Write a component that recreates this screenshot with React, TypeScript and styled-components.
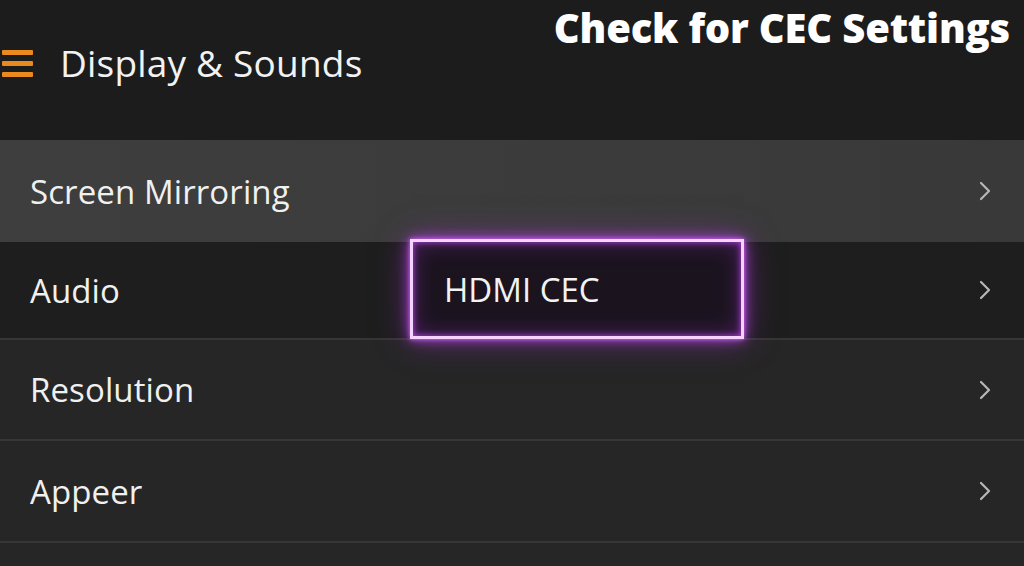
import React from "react";
import styled, { createGlobalStyle } from "styled-components";

const Global = createGlobalStyle`
  html, body { margin: 0; padding: 0; background: #1c1c1c; }
  body { width: 1024px; height: 566px; overflow: hidden; font-family: "Open Sans", "Noto Sans", sans-serif; }
`;

const Screen = styled.div`
  position: relative;
  width: 1024px;
  height: 566px;
  background: #1c1c1c;
  overflow: hidden;
  display: flex;
  flex-direction: column;
`;

const Header = styled.header`
  height: 140px;
  flex: none;
  display: flex;
  justify-content: space-between;
  align-items: flex-start;
  padding: 0 14px 0 2px;
  box-sizing: border-box;
`;

const TitleGroup = styled.div`
  display: flex;
  align-items: center;
  gap: 27px;
  margin-top: 41px;
`;

const Burger = styled.div`
  display: flex;
  flex-direction: column;
  gap: 6px;
  width: 31px;
`;

const Bar = styled.span`
  display: block;
  height: 5px;
  border-radius: 1px;
  background: #e88a1e;
`;

const Title = styled.h1`
  margin: 0;
  font-weight: 400;
  font-size: 37px;
  line-height: 44px;
  color: #f2f2f2;
  letter-spacing: 0.2px;
`;

const Annotation = styled.div`
  margin-top: 4px;
  font-weight: 800;
  font-size: 40px;
  line-height: 48px;
  color: #ffffff;
  letter-spacing: -0.2px;
`;

const List = styled.div`
  display: flex;
  flex-direction: column;
  flex: 1;
`;

const Row = styled.div<{ $bg: string; $h: number; $line?: boolean }>`
  height: ${(p) => p.$h}px;
  flex: none;
  display: flex;
  align-items: center;
  justify-content: space-between;
  padding: 0 32px 0 30px;
  box-sizing: border-box;
  background: ${(p) => p.$bg};
  border-bottom: ${(p) => (p.$line ? "2px solid #363636" : "none")};
`;

const Label = styled.span`
  font-size: 33px;
  color: #f0f0f0;
  letter-spacing: 0.1px;
`;

const Chevron = () => (
  <svg width="14" height="22" viewBox="0 0 14 22" fill="none">
    <path d="M3 3 L11 11 L3 19" stroke="#b8b8b8" strokeWidth="2.2" strokeLinecap="round" strokeLinejoin="round" />
  </svg>
);

const GlowBox = styled.div`
  position: absolute;
  left: 410px;
  top: 239px;
  width: 334px;
  height: 100px;
  box-sizing: border-box;
  border: 3px solid #f6d2ff;
  background: rgba(28, 20, 32, 0.94);
  box-shadow:
    0 0 4px #d070ff,
    0 0 12px rgba(190, 70, 240, 0.9),
    0 0 30px rgba(170, 50, 220, 0.5),
    inset 0 0 6px rgba(200, 80, 255, 0.85),
    inset 0 0 22px rgba(170, 50, 220, 0.4);
  display: flex;
  align-items: center;
  padding-left: 31px;
`;

const BoxLabel = styled.span`
  font-size: 33px;
  color: #f2f2f2;
`;

const rows = [
  { label: "Screen Mirroring", bg: "linear-gradient(90deg, #3e3e3e, #393939)", h: 102 },
  { label: "Audio", bg: "#1e1e1e", h: 98, line: true },
  { label: "Resolution", bg: "#262626", h: 101, line: true },
  { label: "Appeer", bg: "#262626", h: 102, line: true },
];

export default function App() {
  return (
    <Screen>
      <Global />
      <Header>
        <TitleGroup>
          <Burger>
            <Bar />
            <Bar />
            <Bar />
          </Burger>
          <Title>Display &amp; Sounds</Title>
        </TitleGroup>
        <Annotation>Check for CEC Settings</Annotation>
      </Header>
      <List>
        {rows.map((r) => (
          <Row key={r.label} $bg={r.bg} $h={r.h} $line={r.line}>
            <Label>{r.label}</Label>
            <Chevron />
          </Row>
        ))}
        <Row $bg="#262626" $h={30} />
      </List>
      <GlowBox>
        <BoxLabel>HDMI CEC</BoxLabel>
      </GlowBox>
    </Screen>
  );
}
